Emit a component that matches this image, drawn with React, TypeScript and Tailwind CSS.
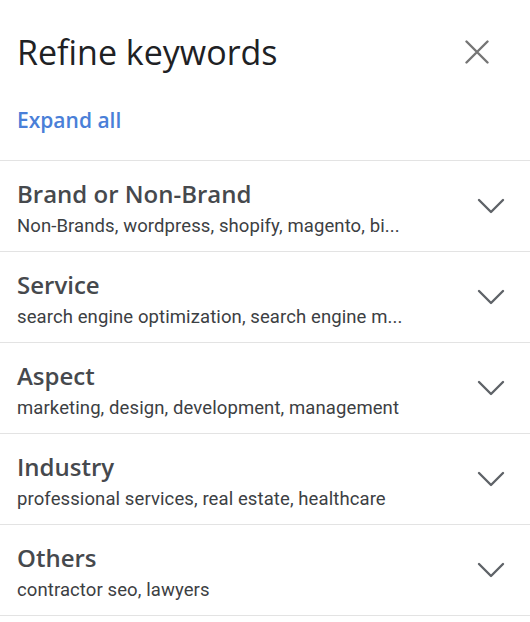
import React from "react";

const groups = [
  { title: "Brand or Non-Brand", items: "Non-Brands, wordpress, shopify, magento, bi..." },
  { title: "Service", items: "search engine optimization, search engine m..." },
  { title: "Aspect", items: "marketing, design, development, management" },
  { title: "Industry", items: "professional services, real estate, healthcare" },
  { title: "Others", items: "contractor seo, lawyers" },
];

function Chevron() {
  return (
    <svg width="28" height="16" viewBox="0 0 28 16" fill="none">
      <polyline points="2,2 14,14 26,2" stroke="#5f6368" strokeWidth="2.4" strokeLinecap="round" strokeLinejoin="round" />
    </svg>
  );
}

export default function App() {
  return (
    <div className="w-[530px] h-[622px] bg-white overflow-hidden font-['Roboto',sans-serif]">
      {/* Header */}
      <div className="px-[17px] pt-[32px] pb-[26px]">
        <div className="flex items-center justify-between">
          <h1 className="text-[34px] leading-[40px] text-[#202124] font-['Open_Sans','Roboto',sans-serif]">
            Refine keywords
          </h1>
          <button className="mr-[24px] w-[24px] h-[24px] flex items-center justify-center">
            <svg width="24" height="24" viewBox="0 0 24 24" fill="none">
              <path d="M1.5 1.5 22.5 22.5M22.5 1.5 1.5 22.5" stroke="#757575" strokeWidth="2.4" strokeLinecap="round" />
            </svg>
          </button>
        </div>
        <div className="mt-[34px] text-[21px] leading-[28px] font-semibold text-[#4a7fd8] font-['Open_Sans','Roboto',sans-serif]">
          Expand all
        </div>
      </div>

      {/* Groups */}
      <div className="border-t border-[#e3e3e3]">
        {groups.map((g) => (
          <div key={g.title} className="h-[91px] border-b border-[#e3e3e3] flex items-center justify-between pl-[17px] pr-[25px]">
            <div className="pt-[4px]">
              <div className="text-[24px] leading-[30px] text-[#46494d] font-semibold font-['Open_Sans','Roboto',sans-serif]">
                {g.title}
              </div>
              <div className="mt-[5px] text-[18.5px] leading-[24px] text-[#3c4043] tracking-[0.1px]">{g.items}</div>
            </div>
            <div>
              <Chevron />
            </div>
          </div>
        ))}
      </div>
    </div>
  );
}
